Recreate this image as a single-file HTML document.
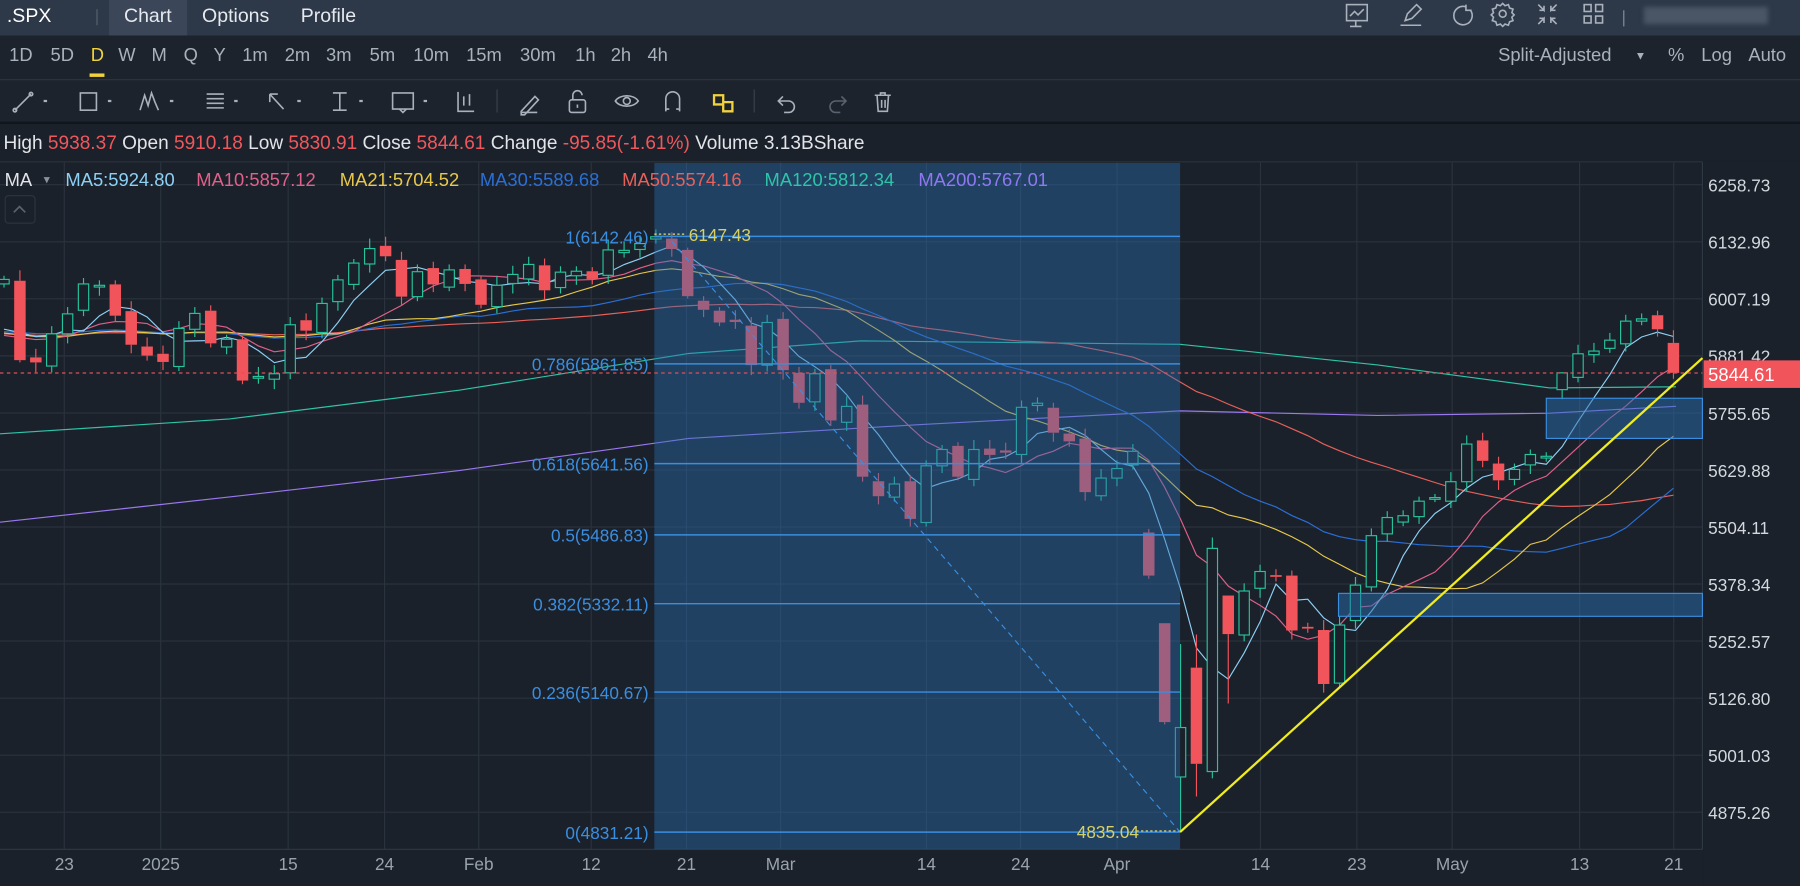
<!DOCTYPE html>
<html><head><meta charset="utf-8">
<style>
html,body{margin:0;padding:0;background:#1b212a;overflow:hidden;width:1800px;height:886px}
#w{position:absolute;left:0;top:0;width:1568px;height:772px;transform:scale(1.14796,1.1477);transform-origin:0 0;font-family:"Liberation Sans",sans-serif;color:#c9cfd6}
.a{position:absolute;white-space:nowrap}
#top{position:absolute;left:0;top:0;width:1568px;height:31px;background:#2d3848}
#tf{position:absolute;left:0;top:31px;width:1568px;height:38px;background:#1c232c;border-bottom:1px solid #2f3843}
#tb{position:absolute;left:0;top:70px;width:1568px;height:36px;background:#1c232c;border-bottom:2px solid #11161c}
.tf{font-size:16px;color:#a9b1bc;top:40px}
.ic{stroke:#a9b1bc;fill:none;stroke-width:1.4}
</style></head><body><div id="w">
<div id="top">
 <div class="a" style="left:6px;top:4px;font-size:17px;color:#fff">.SPX</div>
 <div class="a" style="left:84px;top:8px;width:1px;height:14px;background:#59636f"></div>
 <div class="a" style="left:95px;top:0;width:68px;height:31px;background:#3b4758"></div>
 <div class="a" style="left:108px;top:4px;font-size:17px;color:#e6e9ee">Chart</div>
 <div class="a" style="left:176px;top:4px;font-size:17px;color:#e6e9ee">Options</div>
 <div class="a" style="left:262px;top:4px;font-size:17px;color:#e6e9ee">Profile</div>
 <svg class="a" style="left:1170px;top:0" width="240" height="31" viewBox="0 0 240 31">
  <g class="ic"><rect x="3" y="4" width="18" height="14"/><path d="M11 18v5M6 23h10M6 14l4-4 3 3 5-5"/>
  <path d="M50 22h18M54 18l2-6 8-8 4 4-8 8z"/>
  <path d="M107 6a8 8 0 1 0 4 3M107 4v5h5"/>
  <circle cx="139" cy="12" r="3"/><path d="M139 3l2 2 3-1 1 3 3 1-1 3 2 2-2 2 1 3-3 1-1 3-3-1-2 2-2-2-3 1-1-3-3-1 1-3-2-2 2-2-1-3 3-1 1-3 3 1z"/>
  <path d="M170 4l5 5v-4M175 9h-4M186 4l-5 5v-4M181 9h4M170 21l5-5v4M175 16h-4M186 21l-5-5v4M181 16h4"/>
  <rect x="210" y="4" width="6" height="6"/><rect x="220" y="4" width="6" height="6"/><rect x="210" y="14" width="6" height="6"/><rect x="220" y="14" width="6" height="6"/></g>
 </svg>
 <div class="a" style="left:1414px;top:9px;width:1px;height:14px;background:#8a929c"></div>
 <div class="a" style="left:1432px;top:6px;width:108px;height:15px;background:#4a5566;filter:blur(2px)"></div>
</div>
<div id="tf"></div>
<div class="a tf" style="left:8px">1D</div><div class="a tf" style="left:44px">5D</div>
<div class="a tf" style="left:79px;color:#f2d23c">D</div>
<div class="a" style="left:78px;top:64px;width:13px;height:3px;background:#f2d23c"></div>
<div class="a tf" style="left:103px">W</div><div class="a tf" style="left:132px">M</div><div class="a tf" style="left:160px">Q</div><div class="a tf" style="left:186px">Y</div>
<div class="a tf" style="left:211px">1m</div><div class="a tf" style="left:248px">2m</div><div class="a tf" style="left:284px">3m</div><div class="a tf" style="left:322px">5m</div><div class="a tf" style="left:360px">10m</div><div class="a tf" style="left:406px">15m</div><div class="a tf" style="left:453px">30m</div><div class="a tf" style="left:501px">1h</div><div class="a tf" style="left:532px">2h</div><div class="a tf" style="left:564px">4h</div>
<div class="a tf" style="left:1305px">Split-Adjusted</div><div class="a" style="left:1424px;top:44px;font-size:10px;color:#a9b1bc">▼</div>
<div class="a tf" style="left:1453px">%</div><div class="a tf" style="left:1482px">Log</div><div class="a tf" style="left:1523px">Auto</div>
<div id="tb"></div>
<svg class="a" style="left:0;top:70px" width="800" height="36" viewBox="0 0 800 36">
 <g class="ic">
 <path d="M13 26l14-14"/><circle cx="13" cy="26" r="1.5"/><circle cx="27" cy="12" r="1.5"/><path d="M38 18l3 0" stroke-width="2"/>
 <rect x="70" y="11" width="14" height="15"/><path d="M94 18h3" stroke-width="2"/>
 <path d="M122 26l4-13 3 9 3-11 3 8 3 7"/><path d="M148 18h3" stroke-width="2"/>
 <path d="M180 12h15M180 16h15M180 20h15M180 24h15"/><path d="M204 18h3" stroke-width="2"/>
 <path d="M235 12l12 13M235 12h7M235 12v7"/><path d="M259 18h3" stroke-width="2"/>
 <path d="M290 11h12M296 11v15M290 26h12"/><path d="M313 18h3" stroke-width="2"/>
 <rect x="342" y="11" width="18" height="14"/><path d="M348 25l3 3 3-3"/><path d="M369 18h3" stroke-width="2"/>
 <path d="M399 10v17h14M404 14v8M409 12v10" />
 <path d="M454 27l12-13 3 3-12 13h-3z"/><path d="M454 28h14"/>
 <rect x="496" y="17" width="14" height="11" rx="2"/><path d="M499 17v-4a4 4 0 0 1 8 0M503 21v3"/>
 <path d="M536 18c4-6 16-6 20 0c-4 6-16 6-20 0z"/><circle cx="546" cy="18" r="3"/>
 <path d="M580 27v-11a6 6 0 0 1 12 0v11M580 25h3M589 25h3"/>
 <path d="M622 13h8v8h-8zM630 19h8v8h-8z" stroke="#f2d23c" stroke-width="2"/>
 <path d="M682 14l-4 4 4 4M678 18h9a5 5 0 0 1 0 10h-4" />
 <path d="M733 14l4 4-4 4M737 18h-9a5 5 0 0 0 0 10h4" stroke="#5a626d"/>
 <path d="M762 13h14M767 13v-2h4v2M764 13l1 14h8l1-14M768 17v7M771 17v7"/>
 </g>
 <path d="M433 8v20M657 8v20" stroke="#3a424d"/>
</svg>
<div class="a" style="left:3px;top:115px;font-size:16.6px;color:#e1e4e8">High <span style="color:#f0575c">5938.37</span> Open <span style="color:#f0575c">5910.18</span> Low <span style="color:#f0575c">5830.91</span> Close <span style="color:#f0575c">5844.61</span> Change <span style="color:#f0575c">-95.85(-1.61%)</span> Volume 3.13BShare</div>
<svg id="ch" class="a" style="left:0;top:0" width="1568" height="772"></svg>
</div>
<script>
var C=[6050,5872,5867,5930,5974,6040,6037,5970,5906,5882,
5868,5942,5975,5909,5918,5827,5836,5842,5950,5937,5997,6049,6086,6118,6101,6012,6067,6039,6071,6040,
5994,6037,6061,6083,6026,6066,6068,6051,6115,6114,6129,6144,6117,6013,5983,5955,5956,5861,5955,
5850,5778,5842,5739,5770,5615,5572,5599,5522,5639,5675,5615,5675,5663,5668,5768,5777,5712,5693,5581,5612,
5633,5671,5397,5074,5062,4982,5457,5268,5363,5406,5397,5276,5283,5158,5288,5376,5485,5525,5529,5561,5569,
5604,5687,5650,5607,5631,5664,5660,5844,5886,5892,5916,5958,5963,5940,5844];
var OV={1:[6047,6070,5867],72:[5492,5500,5390],73:[5292,5292,5069],74:[4953,5246,4835],75:[5194,5267,4910],76:[4965,5481,4950],77:[5353,5353,5115],98:[5807,5845,5786],105:[5910,5938,5831],43:[6115,6120,6008]};
function Y(p){return 658-(p-5001.03)*0.3952}
function X(i){return 973+(i-70)*13.85}
var s='';
function L(x1,y1,x2,y2,c,w,d){s+='<line x1="'+x1+'" y1="'+y1+'" x2="'+x2+'" y2="'+y2+'" stroke="'+c+'" stroke-width="'+(w||1)+'"'+(d?' stroke-dasharray="'+d+'"':'')+'/>';}
function T(x,y,t,c,sz,anc){s+='<text x="'+x+'" y="'+y+'" fill="'+c+'" font-size="'+(sz||15)+'" font-family="Liberation Sans,sans-serif"'+(anc?' text-anchor="'+anc+'"':'')+'>'+t+'</text>';}
s+='<rect x="0" y="141" width="1568" height="631" fill="#1b212a"/>';
s+='<line x1="0" y1="141" x2="1483" y2="141" stroke="#2a323d"/>';
var PL=[6258.73,6132.96,6007.19,5881.42,5755.65,5629.88,5504.11,5378.34,5252.57,5126.80,5001.03,4875.26];
PL.forEach(function(p){L(0,Y(p),1483,Y(p),'#2a323d');});
var DX=[[56,'23'],[140,'2025'],[251,'15'],[335,'24'],[417,'Feb'],[515,'12'],[598,'21'],[680,'Mar'],[807,'14'],[889,'24'],[973,'Apr'],[1098,'14'],[1182,'23'],[1265,'May'],[1376,'13'],[1458,'21']];
DX.forEach(function(d){L(d[0],141,d[0],740,'#2a323d');});
L(0,740,1483,740,'#2f3843');L(1483,141,1483,740,'#2f3843');
var P=[];for(var k=0;k<60;k++)P.push(5930+Math.sin(k/5)*20);var A=P.concat(C);
function ma(n,col){var pts=[];for(var i=0;i<C.length;i++){var j=i+60,sm=0;for(var q=0;q<n;q++)sm+=A[j-q];pts.push(X(i).toFixed(1)+','+Y(sm/n).toFixed(1));}
s+='<polyline points="'+pts.join(' ')+'" fill="none" stroke="'+col+'" stroke-width="1"/>';}
s+='<polyline points="0,455 200,433 400,410 600,382 800,370 1028,358 1200,362 1350,360 1460,354" fill="none" stroke="#9a78f0" stroke-width="1"/>';
s+='<polyline points="0,378 200,365 400,340 600,308 750,297 1028,300 1200,318 1350,338 1460,337" fill="none" stroke="#2ec4a8" stroke-width="1"/>';
ma(50,'#e8605a');ma(30,'#2a6fd6');ma(21,'#e8c84a');ma(10,'#e0608a');ma(5,'#8dd0f5');
for(var i=0;i<C.length;i++){var c=C[i],o,h,l;
 if(OV[i]){o=OV[i][0];h=OV[i][1];l=OV[i][2];}else{o=i?C[i-1]+((i*37)%11-5)*2:6040;h=Math.max(o,c)+8+(i*13)%15;l=Math.min(o,c)-8-(i*7)%15;}
 var x=X(i),up=c>=o,col=up?'#26c49c':'#f2545b',yt=Y(Math.max(o,c)),yb=Y(Math.min(o,c));if(yb-yt<1.5)yb=yt+1.5;
 L(x,Y(h),x,yt,col);L(x,yb,x,Y(l),col);
 if(up)s+='<rect x="'+(x-4.5)+'" y="'+yt+'" width="9" height="'+(yb-yt)+'" fill="#1b212a" stroke="'+col+'" stroke-width="1"/>';
 else s+='<rect x="'+(x-5)+'" y="'+yt+'" width="10" height="'+(yb-yt)+'" fill="'+col+'"/>';}
s+='<rect x="570" y="142" width="458" height="598" fill="#2a6db0" fill-opacity="0.42"/>';
var F=[[206,'1(6142.46)'],[317,'0.786(5861.85)'],[404,'0.618(5641.56)'],[466,'0.5(5486.83)'],[526,'0.382(5332.11)'],[603,'0.236(5140.67)'],[725,'0(4831.21)']];
F.forEach(function(f){L(570,f[0],1028,f[0],'#3a8ee0',1.3);T(565,f[0]+6,f[1],'#3a8ee0',15,'end');});
L(570,204,598,204,'#e8e070',1,'2,2');T(600,210,'6147.43','#d8d060',15);
T(938,730,'4835.04','#d8d060',15);L(990,724,1028,724,'#e8e070',1,'2,2');
L(585,210,1028,725,'#3a8ee0',1,'5,4');
s+='<rect x="1347" y="347" width="136" height="35" fill="#2a6db0" fill-opacity="0.5" stroke="#3a8ee0"/>';
s+='<rect x="1166" y="517" width="317" height="20" fill="#2a6db0" fill-opacity="0.5" stroke="#3a8ee0"/>';
L(1028,725,1483,312,'#f0ec20',2);
L(0,325,1483,325,'#e0505a',1,'3,3');
s+='<rect x="1484" y="141" width="84" height="631" fill="#1b212a"/>';
PL.forEach(function(p){T(1488,Y(p)+6,p.toFixed(2),'#d3d8de',15);});
s+='<rect x="1484" y="314" width="84" height="24" fill="#f2545b"/>';T(1488,332,'5844.61','#ffffff',16);
DX.forEach(function(d){T(d[0],758,d[1],'#9aa3ad',15,'middle');});
T(4,162,'MA','#e1e4e8',16);T(38,160,'▾','#8a929c',11);
[[57,'MA5:5924.80','#8dd0f5'],[171,'MA10:5857.12','#e0608a'],[296,'MA21:5704.52','#e8c84a'],[418,'MA30:5589.68','#2a6fd6'],[542,'MA50:5574.16','#e8605a'],[666,'MA120:5812.34','#2ec4a8'],[800,'MA200:5767.01','#8f78f0']].forEach(function(m){T(m[0],162,m[1],m[2],16);});
s+='<rect x="4.5" y="170.5" width="26" height="24" rx="3" fill="none" stroke="#2c343f"/><path d="M12 185l5-5 5 5" stroke="#59626d" fill="none" stroke-width="1.5"/>';
document.getElementById('ch').innerHTML=s;
</script>
</body></html>
